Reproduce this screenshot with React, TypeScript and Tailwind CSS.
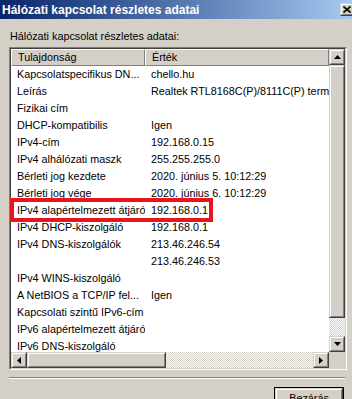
import type { ReactNode } from 'react';

const rows: [string, string][] = [
  ['Kapcsolatspecifikus DN...', 'chello.hu'],
  ['Leírás', 'Realtek RTL8168C(P)/8111C(P) termékcsalád PCI-E Gigabit Ethernet NIC'],
  ['Fizikai cím', ''],
  ['DHCP-kompatibilis', 'Igen'],
  ['IPv4-cím', '192.168.0.15'],
  ['IPv4 alhálózati maszk', '255.255.255.0'],
  ['Bérleti jog kezdete', '2020. június 5. 10:12:29'],
  ['Bérleti jog vége', '2020. június 6. 10:12:29'],
  ['IPv4 alapértelmezett átjáró', '192.168.0.1'],
  ['IPv4 DHCP-kiszolgáló', '192.168.0.1'],
  ['IPv4 DNS-kiszolgálók', '213.46.246.54'],
  ['', '213.46.246.53'],
  ['IPv4 WINS-kiszolgáló', ''],
  ['A NetBIOS a TCP/IP fel...', 'Igen'],
  ['Kapcsolati szintű IPv6-cím', ''],
  ['IPv6 alapértelmezett átjáró', ''],
  ['IPv6 DNS-kiszolgáló', ''],
];

// classic 3d raised frame
function Raised({ className = '', children }: { className?: string; children?: ReactNode }) {
  return (
    <div className={`shrink-0 border border-t-[#d4d0c8] border-l-[#d4d0c8] border-r-[#404040] border-b-[#404040] ${className}`}>
      <div className="flex h-full w-full items-center justify-center border border-t-white border-l-white border-r-[#808080] border-b-[#808080] bg-[#d4d0c8]">
        {children}
      </div>
    </div>
  );
}

function Arrow({ dir }: { dir: 'up' | 'down' | 'left' | 'right' }) {
  if (dir === 'up' || dir === 'down') {
    const pts = dir === 'up' ? '3.5,0 7,4 0,4' : '0,0 7,0 3.5,4';
    return (
      <svg width="7" height="4" viewBox="0 0 7 4">
        <polygon points={pts} fill="#000" />
      </svg>
    );
  }
  const pts = dir === 'left' ? '0,3.5 4,0 4,7' : '0,0 4,3.5 0,7';
  return (
    <svg width="4" height="7" viewBox="0 0 4 7">
      <polygon points={pts} fill="#000" />
    </svg>
  );
}

const checker =
  'bg-[image:repeating-conic-gradient(#ffffff_0_25%,#d4d0c8_0_50%)] bg-[length:2px_2px]';

export default function App() {
  return (
    <div className="relative h-[399px] w-[352px] overflow-hidden bg-[#d4d0c8] font-[family-name:'Liberation_Sans',Arial,sans-serif] text-[10.8px] text-black">
      <div className="flex h-[19px] items-center overflow-hidden bg-linear-to-r from-[#0a246a] to-[#a6caf0] pl-[2px]">
        <span className="text-[12px] leading-none font-bold text-white">Hálózati kapcsolat részletes adatai</span>
        <Raised className="mr-[-5px] ml-auto h-[13px] w-[17px]">
          <svg width="8" height="7" viewBox="0 0 8 7" className="ml-[-3px]">
            <path d="M0.5 0.5 L7.5 6.5 M7.5 0.5 L0.5 6.5" stroke="#000" strokeWidth="1.6" />
          </svg>
        </Raised>
      </div>

      <div className="mt-[11px] ml-[10px] h-[13px] leading-[13px]">Hálózati kapcsolat részletes adatai:</div>

      <div className="mt-[4px] ml-[9px] h-[323px] w-[338px] border border-t-[#808080] border-l-[#808080] border-r-white border-b-white">
        <div className="grid h-full grid-cols-[318px_16px] grid-rows-[303px_16px] border border-t-[#404040] border-l-[#404040] border-r-[#d4d0c8] border-b-[#d4d0c8] bg-white">
          <div className="flex flex-col overflow-hidden">
            <div className="flex h-[17px] shrink-0 bg-[#d4d0c8]">
              <div className="flex w-[134px] items-center border border-t-white border-l-white border-r-[#808080] border-b-[#808080] pl-[6px]">
                Tulajdonság
              </div>
              <div className="flex flex-1 items-center border border-t-white border-l-white border-r-[#808080] border-b-[#808080] pl-[6px]">
                Érték
              </div>
            </div>
            <div className="h-[286px] overflow-hidden">
              {rows.map(([name, value], i) => (
                <div key={i} className="flex h-[17px] items-center whitespace-nowrap">
                  <div className="w-[134px] shrink-0 overflow-hidden pl-[6px]">{name}</div>
                  <div className="overflow-hidden pl-[6px]">{value}</div>
                </div>
              ))}
            </div>
          </div>

          <div className="flex flex-col">
            <Raised className="h-[16px]">
              <Arrow dir="up" />
            </Raised>
            <Raised className="h-[253px]" />
            <div className={`flex-1 ${checker}`} />
            <Raised className="h-[16px]">
              <Arrow dir="down" />
            </Raised>
          </div>

          <div className="flex">
            <Raised className="w-[16px]">
              <Arrow dir="left" />
            </Raised>
            <Raised className="w-[139px]" />
            <div className={`flex-1 ${checker}`} />
            <Raised className="w-[16px]">
              <Arrow dir="right" />
            </Raised>
          </div>
          <div className="bg-[#d4d0c8]" />
        </div>
      </div>

      <div className="mt-[7px] ml-[9px] h-[2px] w-[336px] border-t border-b border-t-[#808080] border-b-white" />

      <div className="mt-[8px] ml-[274px] h-[23px] w-[70px] border border-black">
        <Raised className="h-full w-full">Bezárás</Raised>
      </div>

      <div className="absolute top-[198px] left-[10px] h-[24px] w-[203px] border-4 border-[#e8141e]" />
    </div>
  );
}
